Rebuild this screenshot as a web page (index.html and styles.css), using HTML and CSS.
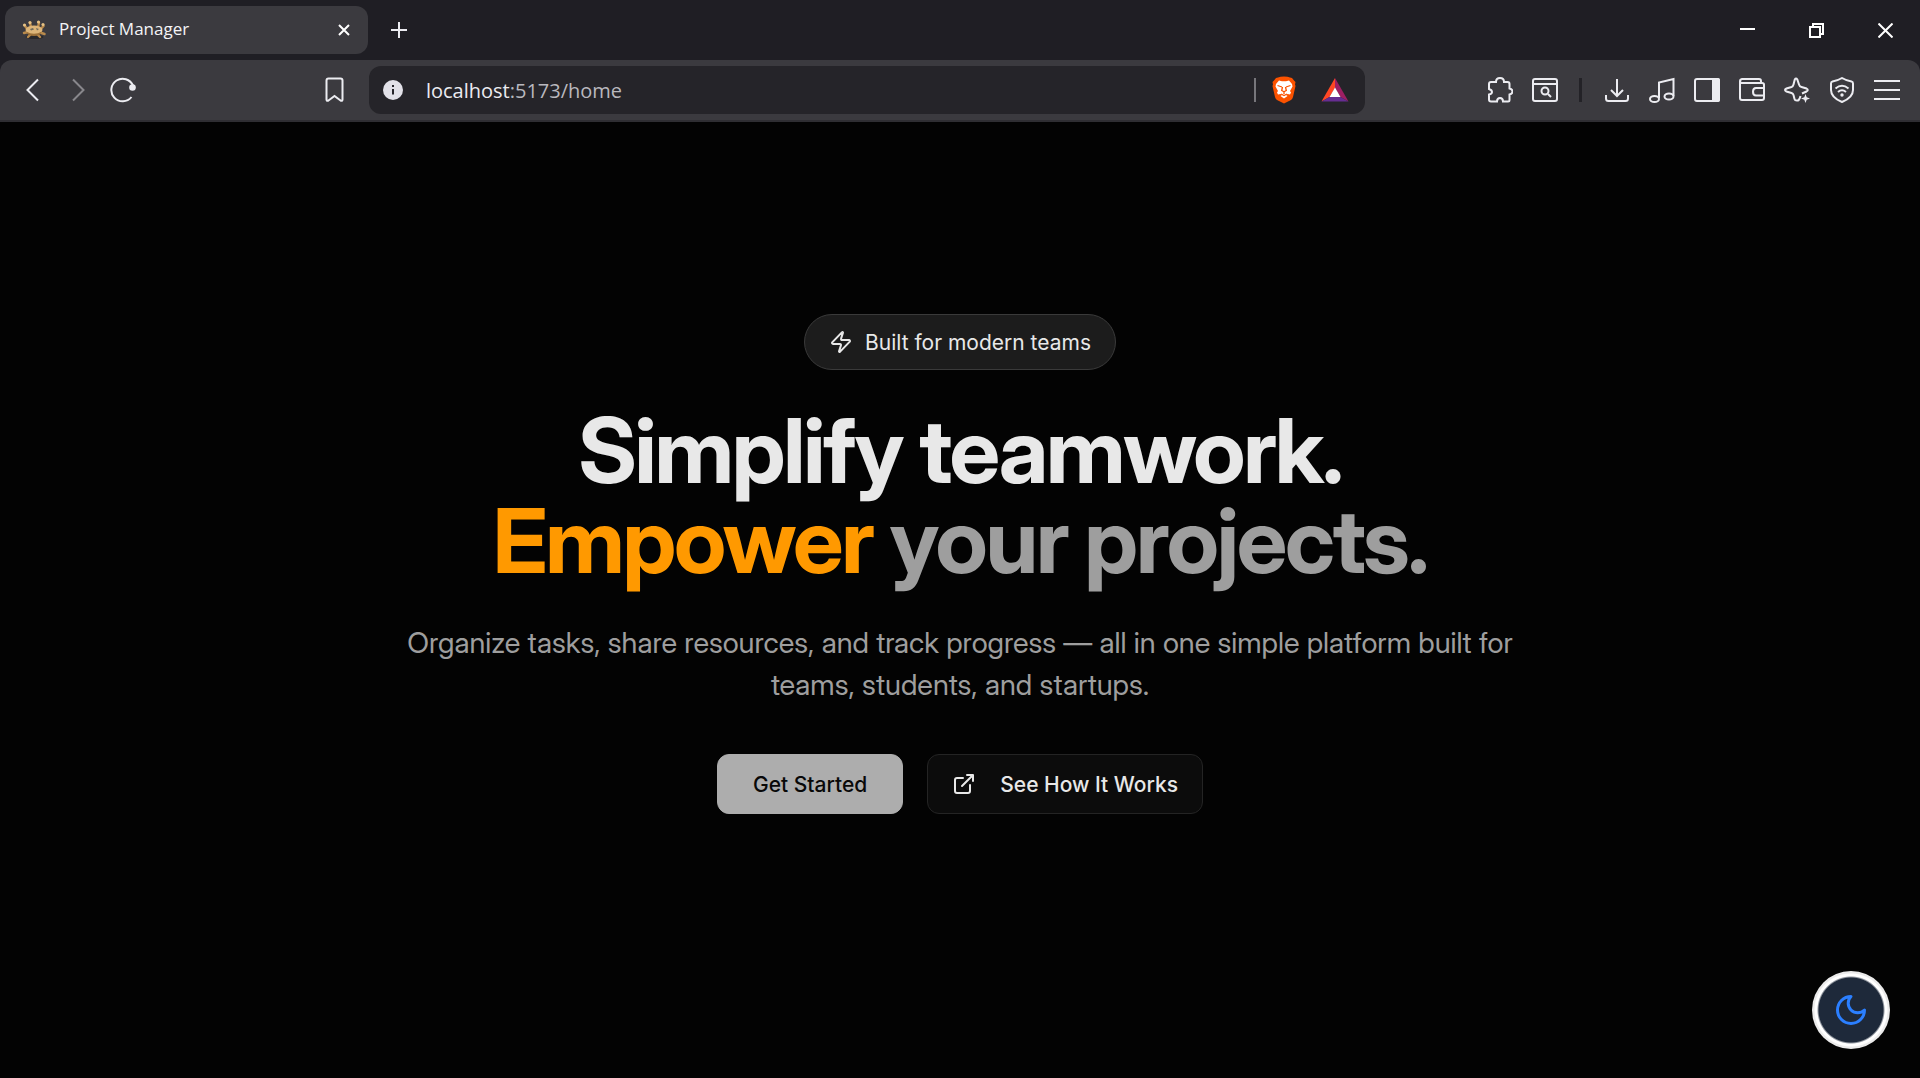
FILE: index.html
```html
<!DOCTYPE html>
<html lang="en">
<head>
<meta charset="utf-8">
<meta name="viewport" content="width=device-width, initial-scale=1">
<title>Project Manager</title>
<link rel="stylesheet" href="styles.css">
</head>
<body>
<div class="browser">
  <header class="chrome">
    <div class="tab-strip">
      <div class="tab">
        <svg class="favicon" viewBox="0 0 24 20" aria-hidden="true">
          <ellipse cx="12.500" cy="17" rx="9" ry="2" fill="#1c1a1c" opacity=".6"/>
          <g stroke="#b98a4c" stroke-width="2.400" stroke-linecap="round" fill="none">
            <path d="M3 6l3 4M8 3l1 4M17 3l-1 4M21.500 6L18 10M2 13l4-1M6 17l2-2M18 17l-2-2M22.500 14L18 12.500"/>
          </g>
          <g fill="#e6c184"><circle cx="2.500" cy="5" r="1.600"/><circle cx="8" cy="2.500" r="1.600"/><circle cx="16.500" cy="2" r="1.600"/><circle cx="21" cy="4.500" r="1.600"/></g>
          <ellipse cx="12" cy="10" rx="8.500" ry="4.500" fill="#dcb478"/>
          <path d="M4 11.500q8 4.500 16 0-2 4.500-8 4.500t-8-4.500z" fill="#9c7038"/>
          <path d="M8 9l3-1 1 1.500-3 1zM14 8l3 1-2 1.500z" fill="#6f6a5c"/>
        </svg>
        <span class="tab-title">Project Manager</span>
        <button class="plain tab-close" aria-label="Close tab"><svg width="12" height="12" viewBox="0 0 12 12"><path d="M1 1l10 10M11 1L1 11" stroke-width="2"/></svg></button>
      </div>
      <button class="plain new-tab" aria-label="New tab"><svg width="16" height="16" viewBox="0 0 16 16"><path d="M8 0v16M0 8h16" stroke-width="2"/></svg></button>
      <div class="window-controls">
        <button class="plain" aria-label="Minimize"><svg width="15" height="16" viewBox="0 0 15 16"><path d="M0 7h15" stroke-width="2"/></svg></button>
        <button class="plain" aria-label="Restore"><svg width="15" height="15" viewBox="0 0 15 15"><path d="M1 4h10v10H1zM4 4V1h10v10h-3" stroke-width="2"/></svg></button>
        <button class="plain" aria-label="Close"><svg width="15" height="15" viewBox="0 0 15 15"><path d="M.5 .5l14 14M14.500 .5l-14 14" stroke-width="2"/></svg></button>
      </div>
    </div>
    <nav class="toolbar" aria-label="Browser">
      <button class="plain tool" aria-label="Back"><svg width="26" height="26" viewBox="0 0 26 26"><path d="M18 2.500L7.500 13 18 23.500"/></svg></button>
      <button class="plain tool dim" aria-label="Forward"><svg width="26" height="26" viewBox="0 0 26 26"><path d="M8 2.500L18.500 13 8 23.500"/></svg></button>
      <button class="plain tool" aria-label="Reload"><svg width="26" height="26" viewBox="0 0 26 26"><path d="M21.500 20A11.300 11.300 0 1 1 23 8.500"/><circle cx="22.500" cy="10.500" r="3.300" fill="currentColor" stroke="none"/></svg></button>
      <div class="location">
        <button class="plain tool" aria-label="Bookmark"><svg width="26" height="26" viewBox="0 0 26 26"><path d="M4.500 3.500q0-2 2-2h12q2 0 2 2v19q0 2-2 1l-6-4.500-6 4.500q-2 1-2-1z"/></svg></button>
        <div class="address">
          <svg class="info" width="20" height="20" viewBox="0 0 20 20" aria-hidden="true"><circle cx="10" cy="10" r="10" fill="#e2e1e8" stroke="none"/><path d="M10 9v5.500M10 5v2" stroke="#252429"/></svg>
          <a class="url" href="#"><span class="host">localhost</span>:5173/home</a>
          <span class="address-rule"></span>
          <button class="plain shield" aria-label="Brave Shields"><svg width="24" height="28" viewBox="0 0 24 28">
            <path d="M6 1.500Q8 .5 12 .5t6 1L20 2l2 2.500 1.500 1.500-.5 2.500.5 1.500-2.500 11q-.5 2-2 3L12 27.500 5 24q-1.500-1-2-3L.5 10 1 8.500.5 6 2 4.500 4 2z" fill="#fb5200" stroke="none"/>
            <path d="M4 8l3-3.500 3 .8h4l3-.8L20 8l.5 2.500L18 15l1 1.500-1 2-2.500-.5L14 19l1.500 1L12 22.500 8.500 20l1.500-1-1.500-1-2.500.5-1-2L6 15l-2.500-4.500z" fill="#fff" stroke="none"/>
            <path d="M5.500 9.500l4.500 1.500M18.500 9.500L14 11M10.500 11l-.8 3.500 2.300 1.300 2.300-1.300-.8-3.500M12 16v2M9 18l3 1.500 3-1.500" stroke="#fb5200" stroke-width="1.300"/>
          </svg></button>
          <button class="plain rewards" aria-label="Brave Rewards"><svg width="28" height="24" viewBox="0 0 28 24">
            <g stroke="none"><path d="M14 0v10L8.500 19 .5 23.500z" fill="#ff4724"/><path d="M14 0l13.500 23.500-8-4.500L14 10z" fill="#9e1f63"/><path d="M.5 23.500l8-4.500h11l8 4.500z" fill="#662d91"/><path d="M14 9.500L19.500 19h-11z" fill="#fff"/></g>
          </svg></button>
        </div>
      </div>
      <button class="plain tool" aria-label="Extensions"><svg width="26" height="26" viewBox="0 0 26 26"><path d="M2 7q0-2 2-2h5C9 2.500 10.500 1 13 1s4 1.500 4 4h3.500q2 0 2 2v4.500q3 .5 3 3t-3 3V23q0 1.500-1.500 1.500h-5q0-3.500-3-3.500t-3 3.500H4q-2 0-2-2v-5q3-.5 3-2.500t-3-3z"/></svg></button>
      <button class="plain tool" aria-label="Search tabs"><svg width="26" height="26" viewBox="0 0 26 26"><rect x="1" y="2" width="24" height="22" rx="2"/><path d="M1 7h24"/><circle cx="13" cy="14" r="3.500"/><path d="M16 17l3 3"/></svg></button>
      <span class="tool-rule"></span>
      <button class="plain tool" aria-label="Downloads"><svg width="26" height="26" viewBox="0 0 26 26"><path d="M13 2v17M7 13l6 6 6-6M2 18v3.500q0 2.500 2.500 2.500h17q2.500 0 2.500-2.500V18"/></svg></button>
      <button class="plain tool" aria-label="Playlist"><svg width="26" height="26" viewBox="0 0 26 26"><path d="M10 21V5.500L24.500 2v17"/><ellipse cx="5.500" cy="22" rx="4.500" ry="3"/><ellipse cx="20" cy="19.500" rx="4.500" ry="3"/></svg></button>
      <button class="plain tool" aria-label="Side panel"><svg width="26" height="26" viewBox="0 0 26 26"><rect x="1" y="2" width="24" height="22" rx="2"/><path d="M19 2h5q1 0 1 1v20q0 1-1 1h-5z" fill="currentColor"/></svg></button>
      <button class="plain tool" aria-label="Wallet"><svg width="26" height="26" viewBox="0 0 26 26"><path d="M25 11V7.500Q25 6 23 6H3Q1 6 1 4.200T3 2h17q2 0 2 2v2M1 4v17q0 2 2 2h20q2 0 2-2v-2.500M25 11h-8q-3 0-3 3.700t3 3.800h8z"/></svg></button>
      <button class="plain tool" aria-label="Leo AI"><svg width="26" height="26" viewBox="0 0 26 26"><path d="M16.500 19q-1 4-2.500 4.500-3 .5-3.500-1.500L9.500 18Q9 16.500 7.500 16l-5-1.500q-3-1.500 0-3l5-1.500q1.500-.5 2-2.500l1.300-5q1.200-2 2.500 0l1.700 5q.5 2 2.500 2.500l5 1.500q2.500 1.500 0 3L18 16.500"/><path d="M21.500 17l1.200 3.300L26 21.500l-3.300 1.200-1.200 3.300-1.200-3.300L17 21.500l3.300-1.200z" fill="currentColor" stroke="none"/></svg></button>
      <button class="plain tool" aria-label="VPN"><svg width="26" height="26" viewBox="0 0 26 26"><path d="M13 1Q17 3.500 22.500 4.500q1.500 .3 1.500 2V13q0 7.500-11 12Q2 20.500 2 13V6.500q0-1.700 1.500-2Q9 3.500 13 1z"/><path d="M6.500 11.500q6.500-5.500 13 0M9 15q4-3.500 8 0"/><circle cx="13" cy="18" r="1.700" fill="currentColor" stroke="none"/></svg></button>
      <button class="plain tool" aria-label="Menu"><svg width="26" height="26" viewBox="0 0 26 26"><path d="M0 4h26M0 13h26M0 22h26"/></svg></button>
    </nav>
  </header>
  <main class="page">
    <section class="hero">
      <div class="pill">
        <svg class="icon" viewBox="0 0 24 24" aria-hidden="true"><path d="M4 14a1 1 0 0 1-.78-1.630l9.900-10.200a.5.5 0 0 1 .86.460l-1.920 6.020A1 1 0 0 0 13 10h7a1 1 0 0 1 .78 1.630l-9.900 10.200a.5.5 0 0 1-.86-.460l1.920-6.020A1 1 0 0 0 11 14z"/></svg>
        <span>Built for modern teams</span>
      </div>
      <h1 class="headline">Simplify teamwork.<br><span class="accent">Empower</span> <span class="muted">your projects.</span></h1>
      <p class="lead">Organize tasks, share resources, and track progress — all in one simple platform built for teams, students, and startups.</p>
      <div class="actions">
        <button class="btn btn-primary">Get Started</button>
        <button class="btn btn-outline">
          <svg class="icon" viewBox="0 0 24 24" aria-hidden="true"><path d="M15 3h6v6M10 14L21 3M18 13v6a2 2 0 0 1-2 2H5a2 2 0 0 1-2-2V8a2 2 0 0 1 2-2h6"/></svg>
          See How It Works
        </button>
      </div>
    </section>
    <button class="theme-toggle" aria-label="Toggle theme"><svg viewBox="0 0 24 24"><path d="M12 3a6 6 0 0 0 9 9 9 9 0 1 1-9-9z"/></svg></button>
  </main>
</div>
</body>
</html>
```
FILE: styles.css
```css
* { box-sizing: border-box; }

body {
  margin: 0;
  background: #030303;
  color: #e8e8e8;
  font-family: Inter, "Liberation Sans", sans-serif;
}

svg {
  display: block;
  flex: none;
  fill: none;
  stroke: currentColor;
  stroke-width: 2;
}

button { font: inherit; cursor: pointer; }

.plain {
  display: flex;
  align-items: center;
  justify-content: center;
  padding: 0;
  border: 0;
  background: none;
  color: #ececf1;
}

.browser {
  display: flex;
  flex-direction: column;
  min-height: 100vh;
}

/* Browser frame */
.chrome {
  background: #1f1e24;
  font-family: "Open Sans", "Noto Sans", sans-serif;
}

.tab-strip {
  display: flex;
  align-items: center;
  height: 60px;
  padding-left: 5px;
}

.tab {
  display: flex;
  align-items: center;
  width: 363px;
  height: 48px;
  padding: 0 12px 0 17px;
  gap: 13px;
  border-radius: 12px;
  background: #3b3a3f;
}

.favicon { width: 24px; height: 20px; stroke: none; }

.tab-title { flex: 1; font-size: 17px; line-height: 22px; padding-bottom: 2px; color: #f4f4f6; }

.tab-close { width: 24px; height: 24px; color: #fff; }

.new-tab { width: 62px; height: 48px; }

.window-controls { display: flex; margin-left: auto; }

.window-controls button { width: 69px; height: 60px; color: #fff; }

.toolbar {
  display: flex;
  align-items: center;
  height: 62px;
  padding: 0 11px 0 10px;
  border-bottom: 2px solid #2f2e33;
  border-radius: 12px 12px 0 0;
  background: #3b3a3f;
}

.tool { flex: none; width: 45px; height: 48px; }

.dim { color: #88878c; }

.tool-rule {
  width: 3px;
  height: 24px;
  margin: 0 12px;
  background: #232227;
}

.location {
  display: flex;
  flex: 1;
  gap: 11px;
  margin: 0 calc(6% - 2px) 0 calc(9% - 3px);
}

.address {
  display: flex;
  flex: 1;
  align-items: center;
  height: 48px;
  padding: 0 16px 0 14px;
  border-radius: 12px;
  background: #252429;
}

.url {
  flex: 1;
  margin-left: 23px;
  color: #b9b8be;
  font-size: 20px;
  text-decoration: none;
}

.host { color: #ececf1; }

.address-rule { width: 2px; height: 24px; background: #77767b; }

.shield { margin-left: 16px; }

.rewards { margin-left: 25px; }

/* Landing page */
.page {
  display: flex;
  flex: 1;
  justify-content: center;
  padding: 192px 24px 64px;
}

.hero {
  display: flex;
  flex-direction: column;
  align-items: center;
  max-width: 1120px;
  text-align: center;
}

.icon {
  width: 24px;
  height: 24px;
  stroke-linecap: round;
  stroke-linejoin: round;
}

.pill {
  display: flex;
  align-items: center;
  gap: 12px;
  height: 56px;
  padding: 0 24px;
  border: 1px solid #3a3a3a;
  border-radius: 28px;
  background: #1c1c1c;
  font-size: 21px;
}

.headline {
  margin: 36px 0 0;
  font-family: "Inter Display", Inter, sans-serif;
  font-size: 90px;
  font-weight: 700;
  line-height: 90px;
  letter-spacing: -0.025em;
}

.accent { color: #ff9900; }

.muted { color: #9e9e9e; }

.lead {
  margin: 36px 0 0;
  color: #9e9e9e;
  font-family: "Inter Display", Inter, sans-serif;
  font-size: 29px;
  line-height: 42px;
}

.actions {
  display: flex;
  flex-wrap: wrap;
  justify-content: center;
  gap: 24px;
  margin-top: 48px;
}

.btn {
  display: flex;
  align-items: center;
  gap: 24px;
  height: 60px;
  padding: 0 24px;
  border: 1px solid #242424;
  border-radius: 12px;
  font-size: 21px;
  font-weight: 500;
}

.btn-primary {
  padding: 0 35px;
  border-color: #adadad;
  background: #adadad;
  color: #080808;
}

.btn-outline { background: #0c0c0c; color: #e8e8e8; }

/* Floats over the page in the lower right corner */
.theme-toggle {
  position: fixed;
  right: 30px;
  bottom: 29px;
  display: grid;
  place-items: center;
  width: 78px;
  height: 78px;
  padding: 0;
  border: 0;
  border-radius: 50%;
  background: radial-gradient(circle, #1e293a 32px, #fff 34px 36px, #ebebeb 37px);
  color: #2b7fff;
}

.theme-toggle svg {
  width: 36px;
  height: 36px;
  stroke-linecap: round;
  stroke-linejoin: round;
}
```
